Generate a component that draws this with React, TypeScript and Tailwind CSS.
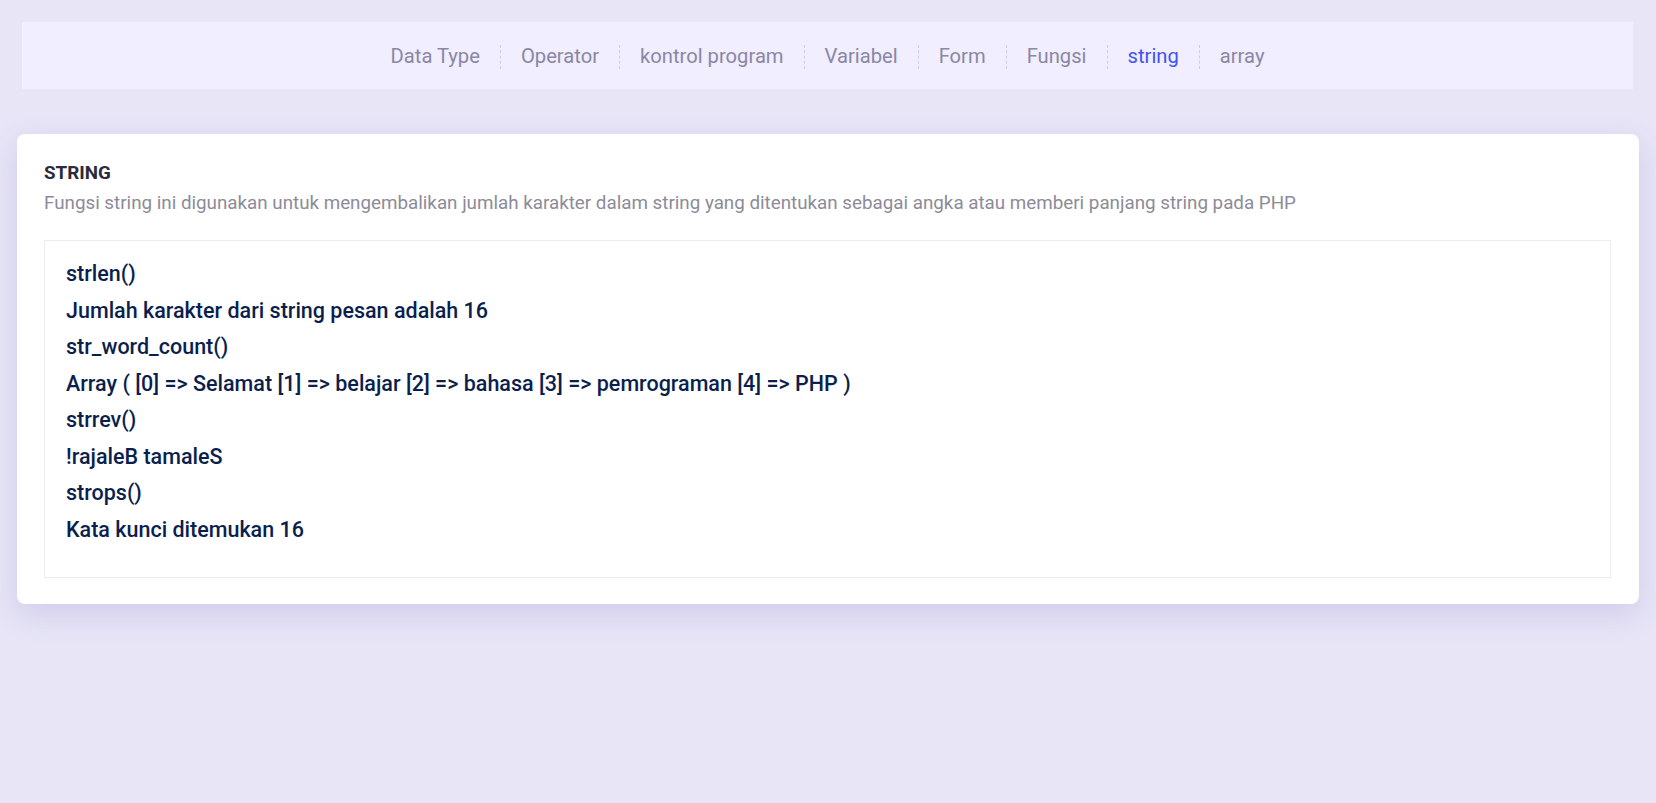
import React from "react";

const navItems = ["Data Type", "Operator", "kontrol program", "Variabel", "Form", "Fungsi", "string", "array"];

const lines = [
  "strlen()",
  "Jumlah karakter dari string pesan adalah 16",
  "str_word_count()",
  "Array ( [0] => Selamat [1] => belajar [2] => bahasa [3] => pemrograman [4] => PHP )",
  "strrev()",
  "!rajaleB tamaleS",
  "strops()",
  "Kata kunci ditemukan 16",
];

export default function App() {
  return (
    <div className="min-h-screen bg-[#e7e5f6] font-['Roboto',sans-serif] pb-10">
      <div className="pl-[22px] pr-[23px] pt-[22px]">
        <nav className="h-[67px] pt-[2px] bg-[#f0eeff] flex items-center justify-center">
          {navItems.map((item, i) => (
            <React.Fragment key={item}>
              {i > 0 && <span className="h-[24px] border-l border-dashed border-[#cfcde0] mx-[20px]" />}
              <span className={`text-[20.2px] ${item === "string" ? "text-[#4154f1]" : "text-[#8a87a4]"}`}>{item}</span>
            </React.Fragment>
          ))}
        </nav>
      </div>
      <div className="mx-[17px] mt-[45px] bg-white rounded-lg shadow-[0_10px_30px_rgba(100,90,190,0.18)] pt-[27px] pb-[26px] pl-[27px] pr-[28px]">
        <h2 className="text-[18.8px] leading-[24px] font-bold text-[#2b2b3a]">STRING</h2>
        <p className="mt-[6px] text-[18.8px] leading-[24px] text-[#8c8b99]">
          Fungsi string ini digunakan untuk mengembalikan jumlah karakter dalam string yang ditentukan sebagai angka atau memberi panjang string pada PHP
        </p>
        <div className="mt-[25px] border border-[#ececf2] pt-[15px] pb-[29px] pl-[21px]">
          {lines.map((l, i) => (
            <div key={i} className="text-[21.5px] leading-[36.5px] font-medium text-[#0b1f4e]">{l}</div>
          ))}
        </div>
      </div>
    </div>
  );
}
